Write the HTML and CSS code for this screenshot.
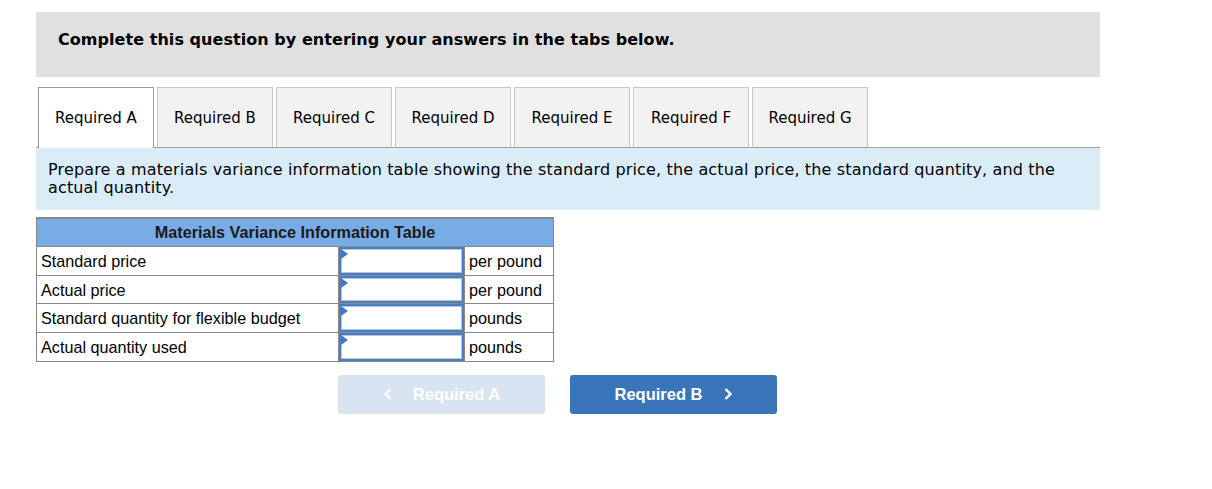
FILE: index.html
```html
<!DOCTYPE html>
<html lang="en">
<head>
    <meta charset="UTF-8">
    <title>Question - Required A</title>
    <link rel="stylesheet" href="styles.css">
</head>
<body>
    <div class="wrap">
        <div class="intro">Complete this question by entering your answers in the tabs below.</div>

        <div class="tabs">
            <div class="tab active">Required A</div>
            <div class="tab">Required B</div>
            <div class="tab">Required C</div>
            <div class="tab">Required D</div>
            <div class="tab">Required E</div>
            <div class="tab">Required F</div>
            <div class="tab">Required G</div>
        </div>

        <div class="prompt">
            Prepare a materials variance information table showing the standard price, the actual price, the standard quantity, and the actual quantity.
        </div>

        <table class="mv-table">
            <tr>
                <th colspan="3">Materials Variance Information Table</th>
            </tr>
            <tr>
                <td class="label">Standard price</td>
                <td class="cell"><div class="field"><input type="text"></div></td>
                <td class="unit">per pound</td>
            </tr>
            <tr>
                <td class="label">Actual price</td>
                <td class="cell"><div class="field"><input type="text"></div></td>
                <td class="unit">per pound</td>
            </tr>
            <tr>
                <td class="label">Standard quantity for flexible budget</td>
                <td class="cell"><div class="field"><input type="text"></div></td>
                <td class="unit">pounds</td>
            </tr>
            <tr>
                <td class="label">Actual quantity used</td>
                <td class="cell"><div class="field"><input type="text"></div></td>
                <td class="unit">pounds</td>
            </tr>
        </table>

        <div class="nav">
            <button class="nav-btn prev" disabled>
                <svg width="10" height="14" viewBox="0 0 10 14"><path d="M7.5 2 L2.5 7 L7.5 12" fill="none" stroke="currentColor" stroke-width="2.4"/></svg>
                <span>Required A</span>
            </button>
            <button class="nav-btn next">
                <span>Required B</span>
                <svg width="10" height="14" viewBox="0 0 10 14"><path d="M2.5 2 L7.5 7 L2.5 12" fill="none" stroke="currentColor" stroke-width="2.4"/></svg>
            </button>
        </div>
    </div>
</body>
</html>
```

FILE: styles.css
```css
body {
    margin: 0;
    font-family: "DejaVu Sans", Verdana, sans-serif;
    color: #000;
    background: #fff;
}

.wrap {
    width: 1064px;
    margin-left: 36px;
    padding-top: 12px;
}

.intro {
    background-color: #e0e0e0;
    height: 65px;
    box-sizing: border-box;
    padding: 18px 0 0 22px;
    font-size: 16px;
    letter-spacing: 0.05px;
    font-weight: bold;
}

.tabs {
    display: flex;
    gap: 3px;
    margin-top: 10px;
    padding-left: 2px;
    position: relative;
    z-index: 1;
}

.tab {
    width: 116px;
    height: 60px;
    box-sizing: border-box;
    border: 1px solid #c8c8c8;
    border-bottom: none;
    background-color: #f2f2f2;
    font-size: 15px;
    display: flex;
    align-items: center;
    justify-content: center;
}

.tab.active {
    background-color: #fff;
    border-color: #999;
    margin-bottom: -1px;
    height: 61px;
}

.prompt {
    background-color: #dbecf9;
    border-top: 1px solid #a0a0a0;
    padding: 13px 40px 11px 12px;
    font-size: 16px;
    letter-spacing: 0.15px;
    line-height: 18px;
    height: 38px;
}

.mv-table {
    margin-top: 7px;
    border-collapse: collapse;
    width: 518px;
    font-family: "Liberation Sans", Arial, sans-serif;
    font-size: 16.2px;
    border: 1px solid #888;
}

.mv-table th {
    background-color: #78ace6;
    border: 1px solid #888;
    border-top: 2px solid #888;
    height: 27px;
    padding: 0;
    font-weight: bold;
    color: #1a1a1a;
}

.mv-table td {
    border: 1px solid #888;
    height: 26.7px;
    padding: 1px 4px 0;
}

.mv-table .label {
    width: 293px;
}

.mv-table .cell {
    width: 125px;
    padding: 0;
}

.mv-table .unit {
    padding-left: 4px;
}

.field {
    position: relative;
    height: 27.7px;
    box-sizing: border-box;
    border: 2px solid #4b7fc1;
}

.field input {
    width: 100%;
    height: 100%;
    box-sizing: border-box;
    border: 1px solid #a9c6ea;
    outline: none;
    margin: 0;
    padding: 0 4px;
}

.field::before {
    content: "";
    position: absolute;
    top: 0;
    left: 0;
    border-top: 5px solid transparent;
    border-bottom: 5px solid transparent;
    border-left: 7px solid #3f78c0;
}

.nav {
    display: flex;
    gap: 25px;
    margin-top: 13px;
    padding-left: 302px;
}

.nav-btn {
    width: 207px;
    height: 39px;
    border: none;
    border-radius: 3px;
    font-family: "Liberation Sans", Arial, sans-serif;
    font-size: 16.5px;
    font-weight: bold;
    color: #fff;
    display: flex;
    align-items: center;
    justify-content: center;
    gap: 20px;
    padding: 0;
}

.nav-btn.prev {
    background-color: #d8e4f2;
}

.nav-btn.next {
    background-color: #3b75b9;
}
```
